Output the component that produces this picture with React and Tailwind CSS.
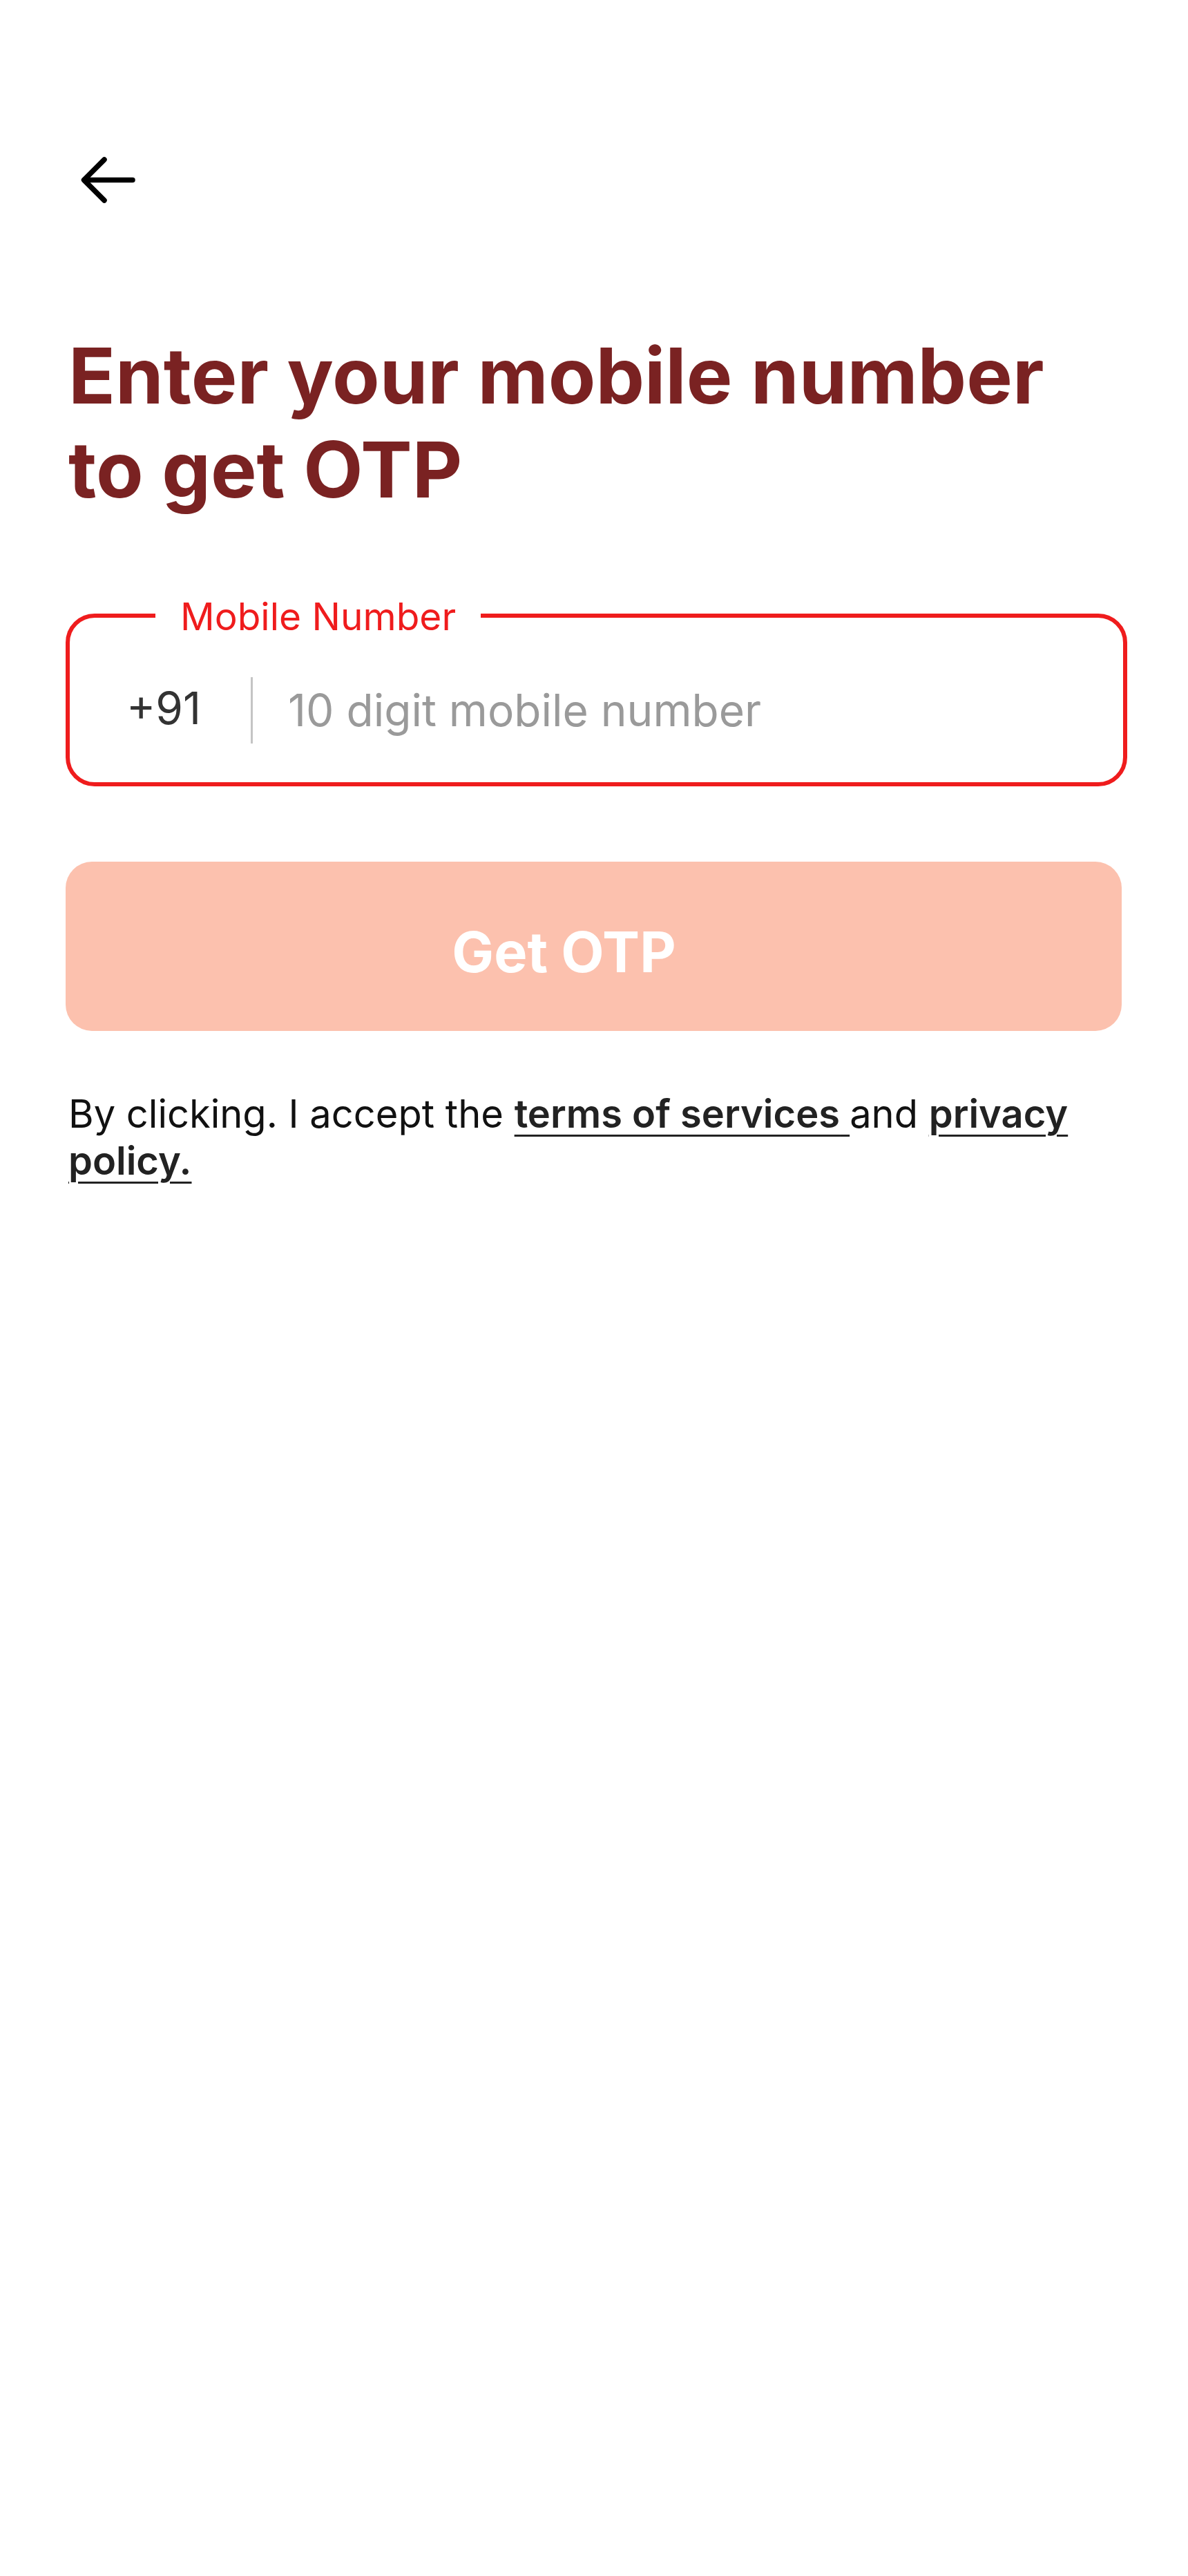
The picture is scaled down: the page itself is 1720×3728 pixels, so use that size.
import React from "react";

export default function App() {
  return (
    <div
      className="min-h-[3728px] w-full bg-white"
      style={{ fontFamily: "Inter, 'Noto Sans', sans-serif" }}
    >
      <div className="flex flex-col pl-[95px] pr-[88px] pt-[223px]">
        <button className="ml-[19px] block h-[75px] w-[84px] p-0" aria-label="Back">
          <svg width="84" height="75" viewBox="0 0 84 75" fill="none">
            <path
              d="M78 37.5H8M37 8L7.5 37.5L37 67"
              stroke="#000"
              strokeWidth="7.5"
              strokeLinecap="round"
              strokeLinejoin="round"
            />
          </svg>
        </button>

        <h1 className="ml-[4px] mt-[177px] text-[112px] font-bold leading-[136px] text-[#7a2222]">
          Enter your mobile number
          <br />
          to get OTP
        </h1>

        <div className="relative mt-[141px] h-[250px] rounded-[42px] border-[6px] border-[#ef1c1d]">
          <span className="absolute -top-[30px] left-[124px] bg-white px-[36px] text-[55px] leading-[56px] text-[#ef1c1d]">
            Mobile Number
          </span>
          <div className="flex h-full items-center pl-[82px] pt-[30px]">
            <span className="pb-[6px] text-[64px] leading-[90px] text-[#333333]">+91</span>
            <div className="ml-[72px] h-[96px] w-[3px] bg-[#c4c4c4]" />
            <input
              type="tel"
              placeholder="10 digit mobile number"
              className="ml-[51px] h-[96px] flex-1 bg-transparent text-[64px] text-[#333333] outline-none placeholder:text-[#9a9a9a]"
              style={{ fontFamily: "Inter, 'Noto Sans', sans-serif" }}
            />
          </div>
        </div>

        <button className="mr-[8px] mt-[109px] flex h-[245px] items-center justify-center rounded-[38px] bg-[#fcc1ae] pr-[86px] pt-[18px] text-[81px] font-bold text-white">
          Get OTP
        </button>

        <p className="ml-[4px] mt-[86px] text-[56px] leading-[68px] text-[#111111]">
          By clicking. I accept the{" "}
          <a className="font-semibold text-[#222222] underline decoration-[3px] underline-offset-[10px]">
            terms of services{" "}
          </a>
          and{" "}
          <a className="font-semibold text-[#222222] underline decoration-[3px] underline-offset-[10px]">
            privacy policy.
          </a>
        </p>
      </div>
    </div>
  );
}
